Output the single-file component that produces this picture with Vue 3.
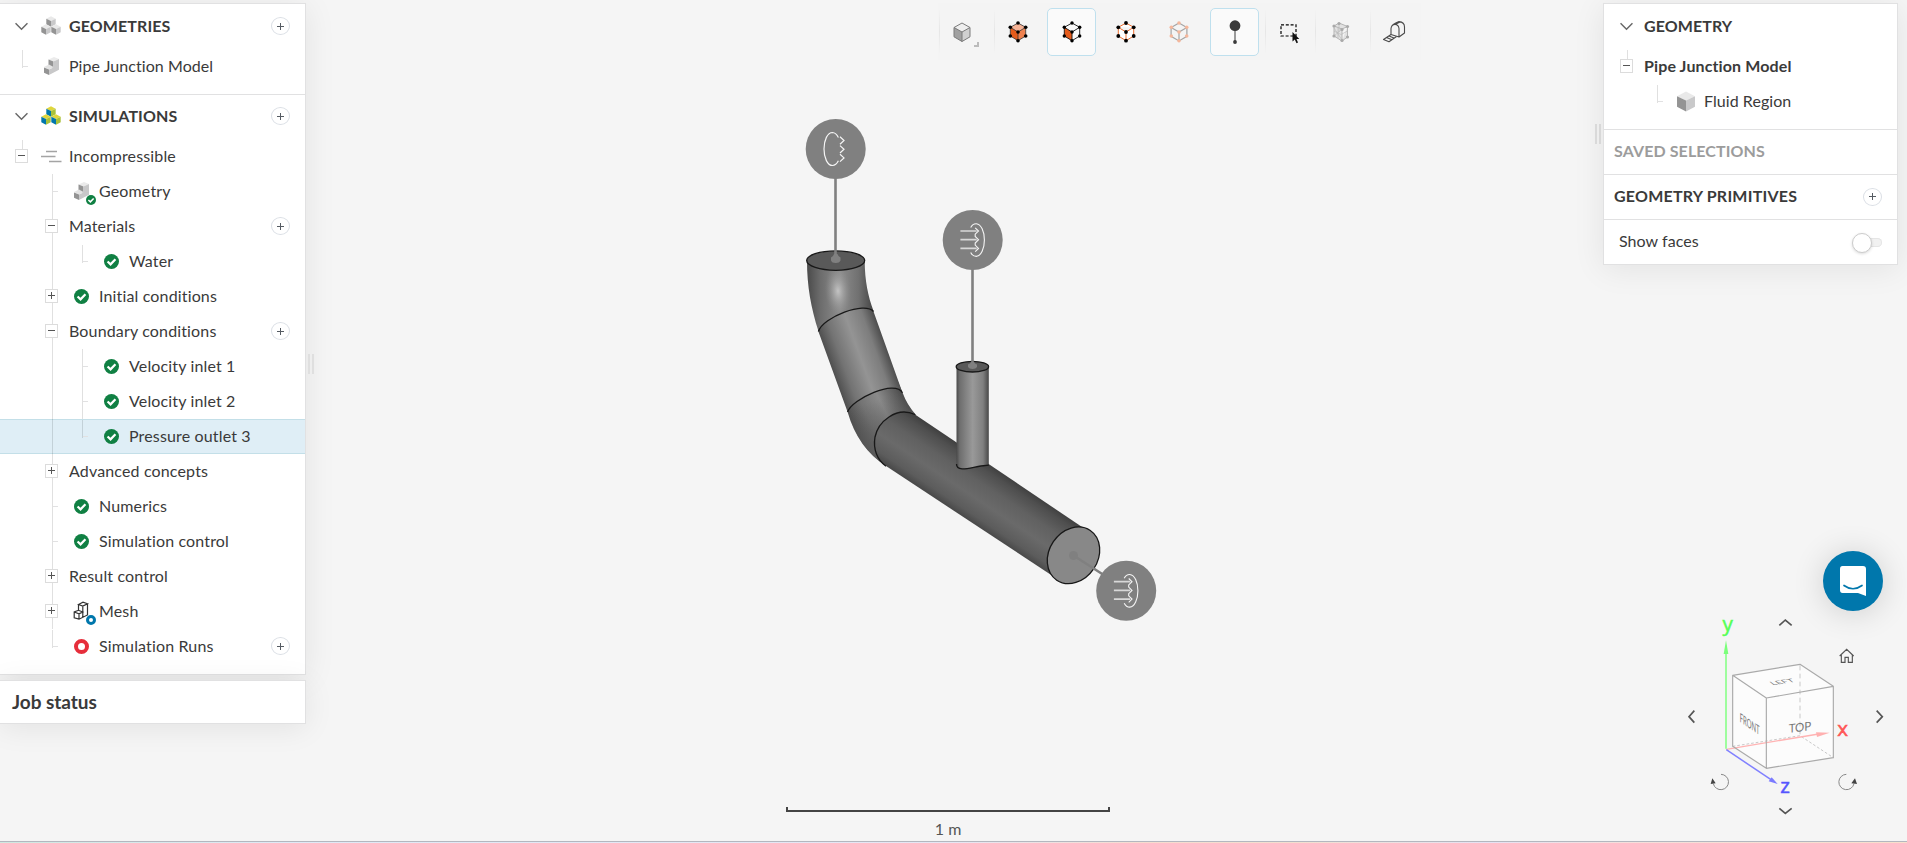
<script setup>
const tree = [
  { text: 'Incompressible', guides: ['top minus'], icon: 'flow' },
  { text: 'Geometry', guides: ['', 'full tick'], icon: 'part', badge: 'ok' },
  { text: 'Materials', guides: ['', 'full minus'], add: true },
  { text: 'Water', guides: ['', 'full', 'half tick'], icon: 'ok' },
  { text: 'Initial conditions', guides: ['', 'full plus'], icon: 'ok' },
  { text: 'Boundary conditions', guides: ['', 'full minus'], add: true },
  { text: 'Velocity inlet 1', guides: ['', 'full', 'full tick'], icon: 'ok' },
  { text: 'Velocity inlet 2', guides: ['', 'full', 'full tick'], icon: 'ok' },
  { text: 'Pressure outlet 3', guides: ['', 'full', 'half tick'], icon: 'ok', selected: true },
  { text: 'Advanced concepts', guides: ['', 'full plus'] },
  { text: 'Numerics', guides: ['', 'full tick'], icon: 'ok' },
  { text: 'Simulation control', guides: ['', 'full tick'], icon: 'ok' },
  { text: 'Result control', guides: ['', 'full plus'] },
  { text: 'Mesh', guides: ['', 'full plus'], icon: 'mesh', badge: 'ring' },
  { text: 'Simulation Runs', guides: ['', 'half tick'], icon: 'red', add: true },
]
const dots = [[12, 3], [4.3, 7.3], [19.7, 7.3], [12, 12], [4.3, 16], [19.7, 16], [12, 20.7]]
</script>

<template>
  <div class="app">
    <svg class="scene" viewBox="0 0 1907 843" width="1907" height="843">
      <defs>
        <linearGradient id="seg" gradientUnits="userSpaceOnUse" x1="833" y1="371" x2="888" y2="351">
          <stop offset="0" stop-color="#505050" /><stop offset=".2" stop-color="#737373" />
          <stop offset=".52" stop-color="#949494" /><stop offset=".8" stop-color="#7d7d7d" />
          <stop offset="1" stop-color="#4c4c4c" />
        </linearGradient>
        <linearGradient id="elbow" x1="0" x2="1">
          <stop offset="0" stop-color="#4a4a4a" /><stop offset=".2" stop-color="#6c6c6c" />
          <stop offset=".5" stop-color="#8d8d8d" /><stop offset=".78" stop-color="#707070" />
          <stop offset="1" stop-color="#444" />
        </linearGradient>
        <radialGradient id="shine" gradientUnits="userSpaceOnUse" cx="0" cy="0" r="1" gradientTransform="translate(838 291) rotate(-4) scale(13 25)">
          <stop offset="0" stop-color="#c4c4c4" /><stop offset="1" stop-color="#8f8f8f" stop-opacity="0" />
        </radialGradient>
        <linearGradient id="elbow2" gradientUnits="userSpaceOnUse" x1="855" y1="430" x2="908" y2="404">
          <stop offset="0" stop-color="#4c4c4c" /><stop offset=".3" stop-color="#747474" />
          <stop offset=".6" stop-color="#8b8b8b" /><stop offset="1" stop-color="#4a4a4a" />
        </linearGradient>
        <linearGradient id="fade" gradientUnits="userSpaceOnUse" x1="875" y1="400" x2="890" y2="440">
          <stop offset="0" stop-color="#5a5a5a" stop-opacity="0" /><stop offset="1" stop-color="#5a5a5a" stop-opacity=".7" />
        </linearGradient>
        <linearGradient id="main" gradientUnits="userSpaceOnUse" x1="997" y1="469.500" x2="965" y2="517.500">
          <stop offset="0" stop-color="#404040" /><stop offset=".12" stop-color="#4f4f4f" />
          <stop offset=".35" stop-color="#616161" /><stop offset=".62" stop-color="#6a6a6a" />
          <stop offset=".88" stop-color="#5c5c5c" /><stop offset="1" stop-color="#4a4a4a" />
        </linearGradient>
        <linearGradient id="small" x1="0" x2="1">
          <stop offset="0" stop-color="#4a4a4a" /><stop offset=".1" stop-color="#6e6e6e" />
          <stop offset=".5" stop-color="#999" /><stop offset=".82" stop-color="#808080" />
          <stop offset="1" stop-color="#484848" />
        </linearGradient>
        <g id="inlet" fill="none" stroke="#f5f5f5" stroke-width="1.100">
          <path d="M-12.3 -9H4M-12.3 -.3H4M-12.3 8.4H4" stroke="#d8d8d8" stroke-width="1.700" />
          <path d="M2.500 -12.200 5.800 -9 2.500 -5.800 2.500 -3.600 5.800 -.3 2.500 3 2.500 5.100 5.800 8.400 2.500 11.600" />
          <path d="M-2 -12.500Q0 -16.300 3.600 -16.200C8.400 -15.800 11.700 -8.500 11.700 0S8.400 16.200 3.600 16.400Q0 16.400 -2 12.500" />
        </g>
      </defs>

      <path fill="url(#elbow)" d="M807 260.500C807 286 811 308 818.400 331L821 332 873 312.500 873.500 311C868 296 864.800 281 864.700 260.500Z" />
      <path fill="url(#shine)" d="M807 260.500C807 286 811 308 818.400 331Q830 315 846 309T873.500 311C868 296 864.800 281 864.700 260.500Z" />
      <path fill="url(#elbow2)" d="M847.600 412L848 398 898 382 902.500 392.500Q907 405 916 415L886 466Q858 448 847.600 412Z" />
      <path fill="url(#fade)" d="M847.600 412L848 398 898 382 902.500 392.500Q907 405 916 415L886 466Q858 448 847.600 412Z" />
      <path fill="url(#seg)" d="M818.400 331.500C823 317 865 301 873.500 311.500L902.500 392.800C895 379 852 399 847.600 412Z" />
      <path fill="url(#main)" d="M915 414.500 1088 531 1055 577.500 886 466C876 459 873 447 875 437C879 421 897 407 915 414.500Z" />
      <path fill="url(#small)" d="M956.500 366.500V465Q957 469.500 964 468.800L988.800 465.300V366.500Z" />
      <g fill="none" stroke="#181818" stroke-width="1.300">
        <path d="M818.400 331.500C823 317 865 301 873.500 311.500M847.600 412C852 399 895 379 902.500 392.800" />
        <path d="M915 414.500C896 406 878 422 875 437C873 449 877 460 886 466.200" />
        <path d="M956.500 464C956.500 473 972 467 981 466L988.800 465.200" />
        <ellipse cx="835.700" cy="260.600" rx="29" ry="9.700" fill="#595959" />
        <ellipse cx="972.400" cy="366.700" rx="16.200" ry="5.300" fill="#595959" />
        <ellipse cx="1073.500" cy="555.300" rx="24.300" ry="30" transform="rotate(34 1073.500 555.300)" fill="#888" />
      </g>
      <g stroke="#808080" fill="#808080" stroke-width="2.600">
        <path d="M835.500 178V258M972.500 269V366M1073.500 555.500 1103 574.500" />
        <g stroke="none">
          <path d="M834 254h3.500q.5 2 3 3.500v3q-1 2.500-4.800 2.500t-4.700-2.500v-3q2.500-1.500 3-3.500ZM971 362h3q.5 1.500 3 2.500v2.500q-1 2-4.500 2t-4.500-2v-2.500q2.500-1 3-2.500Z" />
          <circle cx="1073.500" cy="555.500" r="4.500" />
          <circle cx="835.700" cy="149" r="30" /><circle cx="972.700" cy="240" r="30" /><circle cx="1126.200" cy="590.700" r="30" />
        </g>
      </g>
      <g fill="none" stroke="#f5f5f5" stroke-width="1.200">
        <path d="M838.400 137.500Q836 132.700 832.500 132.500C827.500 132.500 824 140 824 149S827.500 165.500 832.500 165.500Q836 165.400 838.400 160.800" />
        <path d="M840 136.800 844 140.500 840 144.200M840 145.600 844 149.300 840 153M840 154.200 844 157.900 840 161.600" />
      </g>
      <use href="#inlet" x="972.700" y="240" />
      <use href="#inlet" x="1126.200" y="590.700" />
    </svg>

    <svg width="0" height="0" class="defs">
      <symbol id="check" viewBox="0 0 16 16">
        <circle cx="8" cy="8" r="8" fill="#108043" /><path d="M3.800 8 7 11 12.200 5.600" fill="none" stroke="#fff" stroke-width="2.400" />
      </symbol>
      <symbol id="part" viewBox="0 0 18 20">
        <path d="M5.500 3.500 11 1 16 3 10.500 5.500Z" fill="#ebebeb" /><path d="M5.500 3.500 10.500 5.500V12L5.500 9.500Z" fill="#949494" />
        <path d="M1 11 6 8.500 10.500 11 6 13.500Z" fill="#e3e3e3" /><path d="M1 11.500 6 13.500V19L1 16.800Z" fill="#949494" />
        <path d="M10.500 5.500 16 3V13.800L6 19V13.500L10.500 11.500Z" fill="#c8c8c9" />
      </symbol>
      <symbol id="onecube" viewBox="0 0 10 11">
        <path d="M5 .3 9.700 2.700 5 5 .3 2.700Z" fill="var(--a)" /><path d="M.3 2.700 5 5V10.700L.3 8.300Z" fill="var(--b)" /><path d="M9.700 2.700 5 5V10.700L9.700 8.300Z" fill="var(--c)" />
      </symbol>
      <symbol id="cubes" viewBox="0 0 20 20">
        <use href="#onecube" x="5" y="0" width="10" height="11" /><use href="#onecube" x="0" y="8" width="10" height="11" /><use href="#onecube" x="10" y="8" width="10" height="11" />
      </symbol>
    </svg>

    <aside class="left">
      <div class="panel">
        <section>
          <header class="head">
            <svg class="chev" viewBox="0 0 12 8"><path d="M.5 1 6 6.500 11.500 1" /></svg>
            <svg class="cubes gray"><use href="#cubes" /></svg>
            <b>GEOMETRIES</b><i class="add"></i>
          </header>
          <div class="row">
            <span class="cell half tick"></span>
            <span class="slot"><svg class="partsvg"><use href="#part" /></svg></span>
            <span class="label">Pipe Junction Model</span>
          </div>
        </section>
        <section class="sims">
          <header class="head">
            <svg class="chev" viewBox="0 0 12 8"><path d="M.5 1 6 6.500 11.500 1" /></svg>
            <svg class="cubes color"><use href="#cubes" /></svg>
            <b>SIMULATIONS</b><i class="add"></i>
          </header>
          <div v-for="r in tree" :key="r.text" class="row" :class="{ selected: r.selected }">
            <span v-for="(g, i) in r.guides" :key="i" class="cell" :class="g"></span>
            <span v-if="r.icon" class="slot">
              <svg v-if="r.icon === 'ok'" class="status"><use href="#check" /></svg>
              <span v-else-if="r.icon === 'red'" class="status redring"></span>
              <svg v-else-if="r.icon === 'part'" class="partsvg"><use href="#part" /></svg>
              <svg v-else-if="r.icon === 'flow'" class="flow" viewBox="0 0 21 13"><path d="M5 1.500H16M0 6.500H14.500M8 11.500H20.500" stroke="#a4a4a4" stroke-width="1.700" /></svg>
              <svg v-else class="partsvg" viewBox="0 0 18 20" fill="none" stroke="#333" stroke-width="1.200">
                <path d="M5.500 3.500 10 1.200 14.500 2.800 9.800 5ZM5.500 3.500V9.300M9.800 5V11.500M14.500 2.800V14L6 18.200 1.200 16.800V11L5.500 9.300 9.800 11 6 12.800 1.200 11M6 12.800V18.200M9.800 11.500V16.300" />
              </svg>
              <svg v-if="r.badge === 'ok'" class="badge"><use href="#check" /></svg>
              <span v-if="r.badge === 'ring'" class="badge blue"></span>
            </span>
            <span class="label" :class="{ plain: !r.icon }">{{ r.text }}</span>
            <i v-if="r.add" class="add"></i>
          </div>
        </section>
      </div>
      <div class="panel job">Job status</div>
    </aside>
    <div class="grip gleft"></div>

    <main class="center">
      <nav class="toolbar">
        <span class="tool t1">
          <svg viewBox="0 0 24 24"><path d="M12 3 20 7.500 12 12 4 7.500Z" fill="#eee" /><path d="M4 7.500 12 12V21.500L4 16.800Z" fill="#a0a0a0" /><path d="M20 7.500 12 12V21.500L20 16.800Z" fill="#d0d0d0" /><path d="M12 3 20 7.500V16.800L12 21.500 4 16.800V7.500L12 12 20 7.500M12 3 4 7.500M12 12V21.500" fill="none" stroke="#7a7a7a" /></svg>
          <span class="corner"></span>
        </span>
        <span class="tool t2">
          <svg viewBox="0 0 24 24"><path d="M12 3 19.700 7.300 12 12 4.300 7.300Z" fill="#f7b396" /><path d="M4.300 7.300 12 12V20.700L4.300 16Z" fill="#e55c1c" /><path d="M19.700 7.300 12 12V20.700L19.700 16Z" fill="#ee8250" /><path d="M12 3 19.700 7.300V16L12 20.700 4.300 16V7.300ZM4.300 7.300 12 12 19.700 7.300M12 12V20.700" fill="none" stroke="#333" stroke-width=".8" /><circle v-for="(d, i) in dots" :key="i" :cx="d[0]" :cy="d[1]" r="1.800" /></svg>
        </span>
        <span class="tool on t3">
          <svg viewBox="0 0 24 24"><path d="M4.300 7.300 12 12V20.700L4.300 16Z" fill="#e55c1c" /><path d="M12 3 19.700 7.300V16L12 20.700 4.300 16V7.300ZM4.300 7.300 12 12 19.700 7.300M12 12V20.700" fill="none" stroke="#111" stroke-width=".9" /><circle v-for="(d, i) in dots" :key="i" :cx="d[0]" :cy="d[1]" r="1.700" /></svg>
        </span>
        <span class="tool t4">
          <svg viewBox="0 0 24 24"><path d="M12 3 19.700 7.300V16L12 20.700 4.300 16V7.300ZM4.300 7.300 12 12 19.700 7.300M12 12V20.700" fill="#fff" stroke="#ec6e2f" /><circle v-for="(d, i) in dots" :key="i" :cx="d[0]" :cy="d[1]" r="1.900" /></svg>
        </span>
        <span class="tool t5">
          <svg viewBox="0 0 24 24"><path d="M12 3 19.900 7.500V16.300L12 20.900 4.100 16.300V7.500ZM4.100 7.500 12 12 19.900 7.500M12 12V20.700" fill="none" stroke="#a4a4a4" stroke-width="1.200" /><circle v-for="(d, i) in dots" :key="i" :cx="d[0]" :cy="d[1]" r="1.800" fill="#f5b79c" /></svg>
        </span>
        <span class="tool on t6">
          <svg viewBox="0 0 24 24" fill="#3a3a3a"><circle cx="12" cy="5.700" r="5.400" /><path d="M11.500 8h1v14h-1z" /><circle cx="12" cy="22" r="1.900" /></svg>
        </span>
        <span class="tool t7">
          <svg viewBox="0 0 24 24"><path d="M4 4.800H19V16H4Z" fill="none" stroke="#000" stroke-width="1.200" stroke-dasharray="3 1.800" /><path d="M15.500 12V21.500L17.800 19.500 19.500 23.300 21 22.500 19.500 18.900H22.300Z" fill="#111" /></svg>
        </span>
        <span class="tool t8">
          <svg viewBox="0 0 24 24" fill="none" stroke="#b5b5b5"><path d="M5 6 13 9V21L5 16ZM5 6 10 3 18.500 6.500 13 9M18.500 6.500V17L13 21" fill="#e2e2e2" /><path d="M5 11 13 15M9 8V18M5 16 13 9M5 8 13 20M13 14 18.500 11M10 3V12" stroke-width=".6" /><g fill="#a9a9a9" stroke="none"><circle cx="5" cy="6" r="1.600" /><circle cx="10" cy="3.500" r="1.600" /><circle cx="18.500" cy="6.500" r="1.600" /><circle cx="13" cy="9.500" r="1.600" /><circle cx="5" cy="16" r="1.600" /><circle cx="18.500" cy="17" r="1.600" /><circle cx="13" cy="20.500" r="1.600" /></g></svg>
        </span>
        <span class="tool t9">
          <svg viewBox="0 0 24 24" fill="none" stroke="#4a4a4a" stroke-width="1.100" stroke-linejoin="round">
            <path d="M9 15V8.500Q9.500 4.500 13 4.500T17 8.500V17L9 14.500M9.500 6.500Q11 4 17 1.600Q22.500 2 22.500 7V13L17 17M13 4.500 18.500 1.800" />
            <path d="M9 14.500 1.500 19.500 7 21.800 14.500 16.500M4.500 17.500 10 19.700M7 16 12 18" />
          </svg>
        </span>
      </nav>
      <div class="scale"><div class="bar"></div><span>1 m</span></div>
    </main>

    <div class="grip gright"></div>
    <aside class="right">
      <div class="panel">
        <section>
          <header class="head">
            <svg class="chev" viewBox="0 0 12 8"><path d="M.5 1 6 6.500 11.500 1" /></svg><b>GEOMETRY</b>
          </header>
          <div class="row"><span class="cell top minus"></span><b class="label plain">Pipe Junction Model</b></div>
          <div class="row">
            <span class="cell"></span><span class="cell half tick"></span>
            <span class="slot"><svg class="region gray"><use href="#onecube" /></svg></span><span class="label">Fluid Region</span>
          </div>
        </section>
        <section class="bar-row muted"><b>SAVED SELECTIONS</b></section>
        <section class="bar-row"><b class="wide">GEOMETRY PRIMITIVES</b><i class="add"></i></section>
        <section class="bar-row faces"><span>Show faces</span><span class="toggle"></span></section>
      </div>

      <div class="chat">
        <svg width="28" height="32" viewBox="0 0 28 32"><path d="M3.500 1H24Q27 1 27 4V31L19 28H3.500Q1 28 1 25V4Q1 1 3.500 1Z" fill="#fff" /><path d="M5 20.500Q14 27 23 20.500" fill="none" stroke="#0077ac" stroke-width="1.700" stroke-linecap="round" /></svg>
      </div>

      <svg class="nav" viewBox="0 220 720 690" width="240" height="230">
        <g fill="none" stroke="#555" stroke-width="5">
          <path d="M337 287 355 271 374 287M337 836 355 851 374 836M82 543 66 561 82 579M629 543 646 561 629 579" />
          <path d="M518 379 539 359 560 379M523 376V398H534V383H544V398H556V376" stroke-width="3.500" />
          <path d="M162 734A23 23 0 1 1 139 762M538 734A23 23 0 1 0 561 762" stroke="#888" stroke-width="3" />
        </g>
        <path d="M131 763 136 746 146 761ZM570 763 564 746 553 761Z" fill="#444" />
        <path d="M197 437 399 404 499 470V684L298 716 197 650Z" fill="#fdfdfd" fill-opacity=".75" />
        <g fill="none" stroke="#c8c8c8" stroke-width="3" stroke-dasharray="14 10"><path d="M399 408V618" /><path d="M197 650 399 618 499 684" stroke-dasharray="8 6" /></g>
        <path d="M178 659 455 613" stroke="#ffb3b3" stroke-width="4" /><path d="M447 608 488 609 450 622Z" fill="#ffb0b0" />
        <path d="M197 437 399 404 499 470V684L298 716 197 650ZM197 437 298 505 499 470M298 505V716" fill="none" stroke="#aaa" stroke-width="3.500" stroke-linejoin="round" />
        <path d="M177 657V370" stroke="#80ff80" stroke-width="4.500" /><path d="M170 373 177 332 184 373Z" fill="#7bff7b" />
        <path d="M178 660 312 750" stroke="#8080ff" stroke-width="4.500" /><path d="M314 743 332 763 305 755Z" fill="#7b7bff" />
        <g class="faces-text">
          <text font-size="36" transform="matrix(.96 -.13 0 1 365 610)">TOP</text>
          <text font-size="38" transform="matrix(.47 .32 0 1 218 576)">FRONT</text>
          <text font-size="34" transform="matrix(.90 -.14 .5 .40 317 467)">LEFT</text>
        </g>
        <g class="axes" font-size="62" text-anchor="middle" stroke-width="1.500">
          <text x="182" y="305" fill="#55ff55" stroke="#55ff55">y</text>
          <text x="527" y="618" fill="#ff5555" stroke="#ff5555">x</text>
          <text x="354" y="790" fill="#5555ff" stroke="#5555ff">z</text>
        </g>
      </svg>
    </aside>
    <div class="strip"></div>
  </div>
</template>

<style>
body { margin: 0; overflow: hidden; }
</style>

<style scoped>
.app { position: relative; display: flex; width: 1907px; height: 843px; background: #f5f5f5; font: 16px/20px Lato, sans-serif; font-variant-ligatures: none; letter-spacing: .06px; color: #3a3a3a; overflow: hidden; }
.scene { position: absolute; left: 0; top: 0; }
.defs { position: absolute; }
.left { position: relative; width: 306px; padding-top: 3px; box-sizing: border-box; flex: none; }
.panel { background: #fff; border: 1px solid #e1e1e2; box-shadow: 0 4px 30px rgba(0, 0, 0, .08); }
.left .panel { border-left: 0; }
section { padding-bottom: 10px; }
section + section { border-top: 1px solid #e1e1e2; }
.panel > section:first-child { padding-top: 1px; }
.head { display: flex; align-items: center; height: 42px; padding: 0 0 2px 15px; }
.head b { letter-spacing: .1px; }
.chev { width: 13px; height: 9px; fill: none; stroke: #666; stroke-width: 1.3; margin-right: 13px; }
.cubes { width: 20px; height: 20px; margin-right: 8px; }
.gray { --a: #e9e9e9; --b: #949494; --c: #c9c9ca; }
.color { --a: #dfd63c; --b: #0077ac; --c: #a9c13b; }
.row { display: flex; align-items: center; height: 35px; padding-left: 7px; box-sizing: border-box; position: relative; white-space: nowrap; }
.right .row { padding-left: 8px; }
.selected { background: #dfeef6; box-shadow: inset 0 1px #c3dfe8, inset 0 -1px #c3dfe8; }
.cell { position: relative; width: 30px; height: 35px; flex: none; }
.cell::before { content: ''; position: absolute; left: 15px; top: 0; width: 1px; background: rgba(0, 0, 0, .12); }
.full::before { height: 35px; }
.half::before { top: 1px; height: 18px; }
.top::before { top: 1px; height: 10px; }
.tick::after { content: ''; position: absolute; left: 16px; top: 17px; width: 5px; height: 1px; background: #e1e1e2; }
.minus::after, .plus::after { content: ''; position: absolute; left: 8px; top: 10px; width: 11px; height: 12px; border: 1px solid #dcdcdc; background: linear-gradient(#555, #555) 2px 5px / 7px 1px no-repeat, #fff; }
.plus::after { background: linear-gradient(#555, #555) 2px 5px / 7px 1px no-repeat, linear-gradient(#555, #555) 5px 2px / 1px 7px no-repeat, #fff; }
.slot { position: relative; width: 32px; height: 35px; flex: none; }
.label { padding-bottom: 2px; }
.sims .label { letter-spacing: .15px; }
.plain { margin-left: 2px; }
.slot > * { position: absolute; }
.status { left: 7px; top: 10px; width: 15px; height: 15px; }
.redring { box-sizing: border-box; border: 4px solid #e62e3b; border-radius: 50%; }
.partsvg { left: 6px; top: 7px; width: 18px; height: 20px; }
.flow { left: 4px; top: 11px; width: 21px; height: 13px; }
.badge { left: 19px; top: 21px; width: 10px; height: 10px; }
.blue { box-sizing: border-box; border: 3px solid #0077ac; border-radius: 50%; background: #fff; }
.region { left: 4px; top: 7px; width: 20px; height: 21px; }
.add { width: 17px; height: 16px; margin: -1px 15px 0 auto; border: 1px solid #dbdfe5; border-radius: 50%; background: linear-gradient(#555b62, #555b62) 50% 50% / 7px 1px no-repeat, linear-gradient(#555b62, #555b62) 50% 50% / 1px 7px no-repeat, #fff; }
.head .add { margin-top: 0; }
.job { margin-top: 5px; height: 42px; padding-left: 12px; font-size: 19px; letter-spacing: -.05px; line-height: 42px; font-weight: bold; }
.grip { width: 2px; height: 20px; border: solid #dfdfdf; border-width: 0 2px; flex: none; position: relative; }
.gleft { margin: 354px 0 0 2px; }
.gright { margin: 124px 2px 0 0; }
.center { position: relative; display: flex; flex-direction: column; justify-content: space-between; flex: 1; }
.toolbar { display: flex; align-items: center; height: 57px; width: 483px; margin: 3px 0 0 624px; background: #f4f4f4; }
.tool { position: relative; display: flex; align-items: center; justify-content: center; width: 47px; height: 47px; border: 1px solid transparent; border-radius: 5px; flex: none; box-sizing: border-box; }
.tool svg { width: 24px; height: 24px; }
.on { background: #fafafa; border-color: #bfe0ee; width: 49px; height: 48px; }
.t1, .t2, .t7, .t8, .t9 { background: linear-gradient(#e4e4e400, #e6e6e6 50%, #e4e4e400) 0 0 / 1px 100% no-repeat; }
.t1 { width: 55px; padding-right: 7px; }
.t2 { width: 54px; padding-right: 5px; }
.t4 { width: 60px; }
.t5 { width: 47px; margin-right: 7px; padding-right: 2px; }
.t7 { width: 50px; margin-left: 5px; padding-right: 1px; }
.t8 { width: 55px; padding-right: 2px; }
.t9 { width: 52px; padding-right: 2px; }
.corner { position: absolute; right: 13px; bottom: 7px; width: 3px; height: 3px; border: solid #bbb; border-width: 0 2px 2px 0; }
.scale { width: 324px; margin: 0 0 4px 472px; text-align: center; font-size: 16px; color: #555; }
.bar { height: 3px; border: 2px solid #444; border-top: 0; box-sizing: content-box; margin-bottom: 7px; }
.right { position: relative; width: 304px; flex: none; padding-top: 3px; box-sizing: border-box; }
.right .panel { width: 293px; }
.right b.label { letter-spacing: .12px; }
.right section:first-child .chev { margin-left: 1px; margin-right: 11px; }
.bar-row { display: flex; align-items: center; height: 44px; padding: 0 0 0 10px; }
.bar-row > b, .bar-row > span:first-child { padding-bottom: 2px; }
.bar-row > .wide { letter-spacing: .22px; }
.muted { color: #9c9c9c; letter-spacing: .1px; }
.faces { padding-left: 15px; }
.toggle { position: relative; width: 29px; height: 9px; margin: 0 15px 0 auto; background: #f1f1f1; border-radius: 5px; box-shadow: inset 0 0 0 1px #e5e5e5; }
.toggle::before { content: ''; position: absolute; left: -1px; top: -5px; width: 18px; height: 18px; border: 1px solid #ccc; border-radius: 50%; background: #fff; box-shadow: 0 1px 3px rgba(0, 0, 0, .15); }
.chat { display: flex; align-items: center; justify-content: center; width: 60px; height: 60px; margin: 286px 0 0 220px; border-radius: 50%; background: #0077ac; box-shadow: 0 2px 32px rgba(0, 0, 0, .16); }
.nav { display: block; margin: -8px 0 0 64px; position: relative; overflow: visible; }
.faces-text { font-family: Lato, sans-serif; fill: #777; letter-spacing: 0; }
.axes { font-family: 'Open Sans', sans-serif; letter-spacing: 0; }
.strip { position: absolute; left: 0; right: 0; bottom: 0; height: 1px; border-top: 1px solid #b3b7bf; background: linear-gradient(90deg, #cfe8e0, #dfe9f5 15%, #e6e6f3 50%, #f7dccf 60%, #f3dfcf 68%, #e6e2f3 78%, #f5dfdc 85%, #f8e0cc); }
</style>
